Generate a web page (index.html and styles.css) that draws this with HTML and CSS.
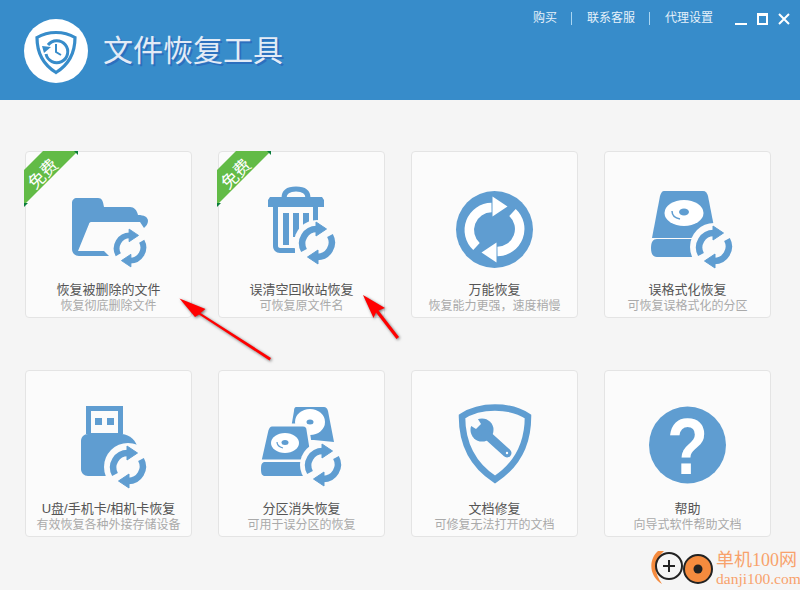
FILE: index.html
```html
<!DOCTYPE html>
<html lang="zh-CN">
<head>
    <meta charset="UTF-8">
    <title>文件恢复工具</title>
    <link rel="stylesheet" href="styles.css">
</head>
<body>
    <header class="header">
        <svg class="logo" viewBox="0 0 64 64">
            <circle cx="32" cy="32" r="32" fill="#fff"/>
            <path d="M32 13.500c7 0 14 2 19 5 0 15-6 27-19 35-13-8-19-20-19-35 5-3 12-5 19-5z" fill="none" stroke="#378cca" stroke-width="3.200"/>
            <path d="M24 26a11 11 0 1 1-2 9" fill="none" stroke="#378cca" stroke-width="3"/>
            <path d="M18 27l9 1-7 6z" fill="#378cca"/>
            <path d="M32 25v8l5 3" fill="none" stroke="#378cca" stroke-width="2"/>
        </svg>
        <h1 class="title">文件恢复工具</h1>
        <nav class="topnav">
            <a class="navlink">购买</a>
            <span class="navsep"></span>
            <a class="navlink">联系客服</a>
            <span class="navsep"></span>
            <a class="navlink">代理设置</a>
            <div class="winbtns">
                <span class="winmin"></span>
                <span class="winmax"></span>
                <svg class="winclose" viewBox="0 0 12 12"><path d="M1 1l10 10M11 1L1 11" stroke="#fff" stroke-width="2"/></svg>
            </div>
        </nav>
    </header>

    <main class="grid">
        <div class="card">
            <svg class="ribbon" viewBox="0 0 54 56">
                <path d="M0 19L19 0H54L0 54z" fill="#62bb46"/>
                <path d="M50 0h4v4zM0 52h4l-4 4z" fill="#0b7d3b"/>
                <text class="ribbon-text" transform="translate(19 23) rotate(-45)" y="6">免费</text>
            </svg>
            <svg class="icon" viewBox="0 0 101 100">
                <defs>
                    <g id="sync">
                        <path d="M-13 7.500A14.500 14.500 0 0 1 0-14" fill="none" stroke-width="6.500"/>
                        <path d="M-1-21L9.500-14-1-7z"/>
                        <path d="M13-7.500A14.500 14.500 0 0 1 0 14" fill="none" stroke-width="6.500"/>
                        <path d="M1 21L-9.500 14 1 7z"/>
                    </g>
                </defs>
                <path d="M19 18h21c4 0 5 3 6 9h26c4 0 7 3 8 8 6 0 10 2 10 6 0 3-2 5-4 7l-4-6H33c-1 0-2 1-2 2L20 71h26l5 5H21c-4 0-7-3-7-7V23c0-3 2-5 5-5z" fill="#5f9dd1"/>
                <use href="#sync" transform="translate(72 68) scale(.9)" fill="#5f9dd1" stroke="#5f9dd1"/>
            </svg>
            <div class="name">恢复被删除的文件</div>
            <div class="desc">恢复彻底删除文件</div>
        </div>
        <div class="card">
            <svg class="ribbon" viewBox="0 0 54 56">
                <path d="M0 19L19 0H54L0 54z" fill="#62bb46"/>
                <path d="M50 0h4v4zM0 52h4l-4 4z" fill="#0b7d3b"/>
                <text class="ribbon-text" transform="translate(19 23) rotate(-45)" y="6">免费</text>
            </svg>
            <svg class="icon" viewBox="0 0 101 100">
                <path d="M33 18c0-6 4-9 12-9s12 3 12 9" fill="none" stroke="#5f9dd1" stroke-width="5"/>
                <path d="M19 17h52l2 3v7H17v-7z" fill="#5f9dd1"/>
                <path d="M22 27h5v39c0 1 1 2 2 2h15v5H29c-4 0-7-3-7-7zM62 27h5v22h-5z" fill="#5f9dd1"/>
                <path d="M32 33h6v32h-6zM42 33h6v24h-6zM52 33h6v12h-6z" fill="#5f9dd1"/>
                <circle cx="66" cy="63" r="23" fill="#fbfbfb"/>
                <use href="#sync" transform="translate(66 63)" fill="#5f9dd1" stroke="#5f9dd1"/>
            </svg>
            <div class="name">误清空回收站恢复</div>
            <div class="desc">可恢复原文件名</div>
        </div>
        <div class="card">
            <svg class="icon" viewBox="0 0 101 100">
                <circle cx="50.500" cy="49.500" r="38.500" fill="#5f9dd1"/>
                <g transform="translate(50.500 49.500)" fill="#fff" stroke="#fff">
                    <path d="M-18 17A22.500 22.500 0 0 1-3-22" fill="none" stroke-width="9.500"/>
                    <path d="M-2-33L13-23-2-13z" stroke="none"/>
                    <path d="M18-17A22.500 22.500 0 0 1 3 22" fill="none" stroke-width="9.500"/>
                    <path d="M2 33L-13 23 2 13z" stroke="none"/>
                </g>
            </svg>
            <div class="name">万能恢复</div>
            <div class="desc">恢复能力更强，速度稍慢</div>
        </div>
        <div class="card">
            <svg class="icon" viewBox="0 0 101 100">
                <path d="M27 11h39c3 0 4 2 5 5l7 36-24 6H15l8-42c1-3 2-5 4-5z" fill="#5f9dd1"/>
                <ellipse cx="47" cy="33" rx="19.500" ry="13" fill="#fff"/>
                <ellipse cx="47" cy="32" rx="5" ry="3.500" fill="#5f9dd1"/>
                <path d="M35 31c0 4 3 7 8 8" fill="none" stroke="#5f9dd1" stroke-width="1.500"/>
                <path d="M20 59h38c-1 6-1 12 1 18H20c-4 0-6-3-6-9s2-9 6-9z" fill="#5f9dd1"/>
                <circle cx="77" cy="67" r="24" fill="#fbfbfb"/>
                <use href="#sync" transform="translate(77 67)" fill="#5f9dd1" stroke="#5f9dd1"/>
            </svg>
            <div class="name">误格式化恢复</div>
            <div class="desc">可恢复误格式化的分区</div>
        </div>

        <div class="card">
            <svg class="icon" viewBox="0 0 101 100">
                <path d="M28 7h37v28H28zm5 5v22h27V12zm4 7h7v7h-7zm12 0h7v7h-7z" fill="#5f9dd1" fill-rule="evenodd"/>
                <path d="M30 35h34c8 1 14 6 16 15v27H30c-4 0-7-3-7-7V42c0-4 3-7 7-7z" fill="#5f9dd1"/>
                <circle cx="70" cy="68" r="24" fill="#fbfbfb"/>
                <use href="#sync" transform="translate(70 68)" fill="#5f9dd1" stroke="#5f9dd1"/>
            </svg>
            <div class="name">U盘/手机卡/相机卡恢复</div>
            <div class="desc">有效恢复各种外接存储设备</div>
        </div>
        <div class="card">
            <svg class="icon" viewBox="0 0 101 100">
                <path d="M45 8h28c2 0 3 1 4 4l6 31-20-2H38l5-29c0-3 1-4 2-4z" fill="#5f9dd1"/>
                <ellipse cx="59" cy="23" rx="15" ry="13" fill="#fff"/>
                <ellipse cx="59" cy="23" rx="3.500" ry="2.500" fill="#5f9dd1"/>
                <path d="M21 26h31c3 0 5 2 5 5l5 31H9l7-31c1-3 2-5 5-5z" fill="#5f9dd1" stroke="#fbfbfb" stroke-width="3"/>
                <ellipse cx="34" cy="44" rx="14" ry="10" fill="#fff"/>
                <ellipse cx="34" cy="43.500" rx="3.500" ry="2.500" fill="#5f9dd1"/>
                <path d="M26 43c0 3 2 5 6 6" fill="none" stroke="#5f9dd1" stroke-width="1.200"/>
                <path d="M14 63h38v14H14c-3 0-4-2-4-7s1-7 4-7z" fill="#5f9dd1"/>
                <circle cx="72" cy="66" r="23" fill="#fbfbfb"/>
                <use href="#sync" transform="translate(72 66)" fill="#5f9dd1" stroke="#5f9dd1"/>
            </svg>
            <div class="name">分区消失恢复</div>
            <div class="desc">可用于误分区的恢复</div>
        </div>
        <div class="card">
            <svg class="icon" viewBox="0 0 101 100">
                <path d="M51 8.500c13 0 24 3 33 9 0 27-10 48-33 63-23-15-33-36-33-63 9-6 20-9 33-9z" fill="none" stroke="#5f9dd1" stroke-width="6.500"/>
                <circle cx="38" cy="31" r="11.500" fill="#5f9dd1"/>
                <path d="M42 35l21 19" stroke="#5f9dd1" stroke-width="9" stroke-linecap="round"/>
                <path d="M33 20l-8 8 8 5 5-5z" fill="#fbfbfb" transform="translate(-1 -3)"/>
                <circle cx="63" cy="54" r="1.200" fill="#fff"/>
            </svg>
            <div class="name">文档修复</div>
            <div class="desc">可修复无法打开的文档</div>
        </div>
        <div class="card">
            <svg class="icon" viewBox="0 0 101 100">
                <circle cx="50.500" cy="46" r="38.500" fill="#5f9dd1"/>
                <text class="qmark" transform="translate(50.500 75) scale(.84 1)">?</text>
            </svg>
            <div class="name">帮助</div>
            <div class="desc">向导式软件帮助文档</div>
        </div>
    </main>

    <svg class="arrows" viewBox="0 0 800 590">
        <path d="M271 358L200.500 313 205.500 309 179.500 298.500 195 317 199 314.500 269.500 360.500z"/>
        <path d="M399 337L378.500 310.500 385 308 363 295 373.500 318 376 312.500 396.500 339z"/>
    </svg>

    <div class="watermark">
        <svg class="wm-logo" viewBox="0 0 64 42">
            <path d="M8 6C-1 14-2 30 12 39 4 28 3 16 14 6z" fill="#f58b3e"/>
            <circle cx="19" cy="21" r="13" fill="none" stroke="#222" stroke-width="2"/>
            <path d="M19 15v12M13 21h12" stroke="#222" stroke-width="2"/>
            <circle cx="48" cy="24" r="14" fill="#f58b3e" stroke="#222" stroke-width="2"/>
            <circle cx="48" cy="24" r="4.500" fill="#222"/>
        </svg>
        <div class="wm-text">
            <div class="wm-name">单机100网</div>
            <div class="wm-url">danji100.com</div>
        </div>
    </div>
</body>
</html>
```

FILE: styles.css
```css
body {
    font-family: "Liberation Sans", "Noto Sans CJK SC", sans-serif;
    margin: 0;
    width: 800px;
    height: 590px;
    overflow: hidden;
    position: relative;
    background: #f5f5f5;
}

.header {
    box-sizing: border-box;
    height: 100px;
    background: #378cca;
    display: flex;
    align-items: center;
    padding: 2px 0 0 24px;
}

.logo {
    width: 64px;
    height: 64px;
    margin-right: 15px;
}

.title {
    margin: 0;
    font-size: 30px;
    font-weight: 400;
    line-height: 40px;
    color: #e3ebf6;
    text-shadow: 2px 2px 0 #2c6fbe;
}

.topnav {
    align-self: flex-start;
    margin-left: auto;
    display: flex;
    align-items: center;
    height: 16px;
    padding: 8px 10px 0 0;
    font-size: 12px;
    color: #e6f1fa;
}

.navlink {
    line-height: 16px;
}

.navsep {
    width: 1px;
    height: 13px;
    margin: 0 15px 0 14px;
    background: #a9d6f2;
}

.winbtns {
    display: flex;
    align-items: flex-end;
    margin-left: 22px;
    height: 12px;
    margin-top: 2px;
}

.winmin {
    width: 12px;
    height: 2px;
    margin-right: 10px;
    background: #fff;
}

.winmax {
    box-sizing: border-box;
    width: 11px;
    height: 12px;
    margin-right: 10px;
    border: 2px solid #fff;
    border-top-width: 3px;
}

.winclose {
    width: 12px;
    height: 12px;
}

.grid {
    display: grid;
    grid-template-columns: repeat(4, 167px);
    grid-auto-rows: 167px;
    column-gap: 26px;
    row-gap: 52px;
    padding: 51px 0 0 25px;
}

.card {
    box-sizing: border-box;
    position: relative;
    background: #fbfbfb;
    border: 1px solid #e4e4e4;
    border-radius: 4px;
    padding-top: 28px;
    text-align: center;
}

.icon {
    display: block;
    width: 101px;
    height: 100px;
    margin: 0 auto;
}

.name {
    margin-top: 2px;
    font-size: 13px;
    line-height: 16px;
    color: #555;
    white-space: nowrap;
}

.desc {
    margin-top: 1px;
    font-size: 12px;
    line-height: 14px;
    color: #aaa;
    white-space: nowrap;
}

.ribbon {
    position: absolute;
    left: -2px;
    top: -1px;
    width: 54px;
    height: 56px;
}

.ribbon-text {
    font-size: 17px;
    fill: #fff;
    text-anchor: middle;
}

.qmark {
    font-family: "Liberation Sans", sans-serif;
    font-size: 80px;
    font-weight: 700;
    fill: #fff;
    text-anchor: middle;
}

.arrows {
    position: absolute;
    left: 0;
    top: 0;
    width: 800px;
    height: 590px;
    fill: #f00;
    filter: drop-shadow(1px 1px 1.5px rgba(0,0,0,0.55));
    pointer-events: none;
}

.watermark {
    position: absolute;
    left: 650px;
    bottom: 3px;
    display: flex;
    align-items: flex-end;
    gap: 2px;
}

.wm-logo {
    width: 64px;
    height: 42px;
    flex-shrink: 0;
}

.wm-text {
    font-family: "Liberation Serif", "Noto Sans CJK SC", serif;
    color: #f8a26c;
    white-space: nowrap;
}

.wm-name {
    font-size: 18px;
    line-height: 22px;
}

.wm-url {
    font-size: 15.500px;
    line-height: 16px;
}
```
